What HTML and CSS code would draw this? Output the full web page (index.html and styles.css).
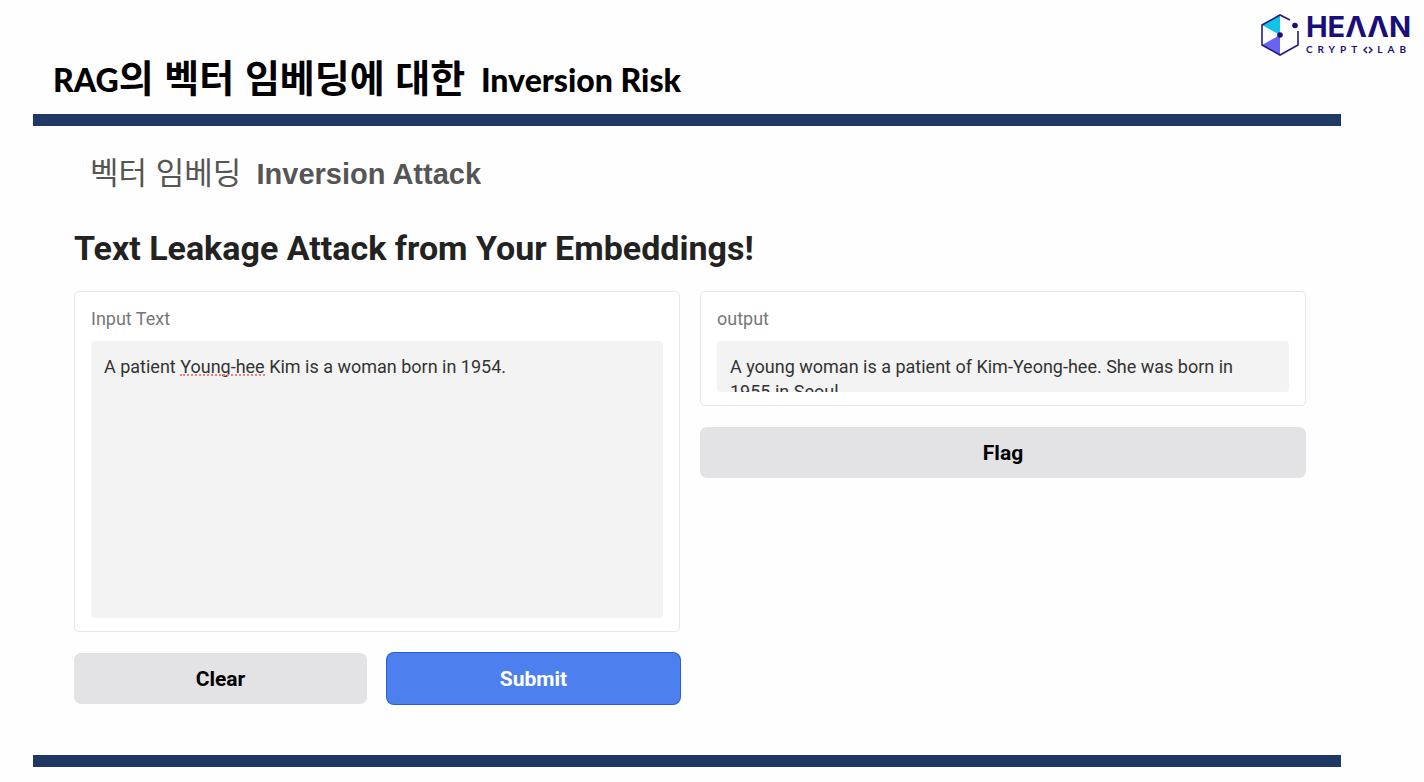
FILE: index.html
```html
<!DOCTYPE html>
<html lang="ko">
  <head>
    <meta charset="utf-8" />
    <title>RAG의 벡터 임베딩에 대한 Inversion Risk</title>
    <link rel="stylesheet" href="styles.css">
  </head>
  <body>
    <div class="slide">
      <header class="slide-header">
        <h1>RAG<span class="ko">의 벡터 임베딩에 대한</span> Inversion Risk</h1>
        <div class="logo">
          <svg class="logo-mark" viewBox="0 0 40 44" aria-hidden="true">
            <path d="M20 2 L2 12 L20 22 Z" fill="#10c4e8" />
            <path d="M20 22 L2 32 L20 42 Z" fill="#6a62f0" />
            <path d="M30 7 L20 2 L2 12 V32 L20 42 L38 32 V18" fill="none" stroke="#231c7c" stroke-width="1.6" />
            <circle cx="20" cy="22" r="2.8" fill="#1a0f7a" />
            <circle cx="35" cy="12.500" r="2.8" fill="#1a0f7a" />
          </svg>
          <div class="logo-text">
            <span class="logo-name">HEΛΛN</span>
            <span class="logo-sub">CRYPT<svg class="logo-o" viewBox="0 0 10 8" aria-label="O"><path d="M4 1 L1 4 L4 7 M6 1 L9 4 L6 7" fill="none" stroke="#231c7c" stroke-width="1.5" /></svg>LAB</span>
          </div>
        </div>
      </header>

      <main class="slide-body">
        <h2><span class="ko-sub">벡터 임베딩</span> <b>Inversion Attack</b></h2>

        <form class="demo">
          <h3>Text Leakage Attack from Your Embeddings!</h3>
          <div class="columns">
            <div class="column">
              <div class="card">
                <label for="inputText">Input Text</label>
                <div class="field">
                  <textarea id="inputText" class="input-text" spellcheck="false">A patient Young-hee Kim is a woman born in 1954.</textarea>
                  <span class="misspelled"></span>
                </div>
              </div>
              <div class="buttons">
                <button type="reset">Clear</button>
                <button type="button" class="primary">Submit</button>
              </div>
            </div>
            <div class="column">
              <div class="card">
                <label for="output">output</label>
                <div class="field">
                  <textarea id="output" class="output-text" spellcheck="false" readonly>A young woman is a patient of Kim-Yeong-hee. She was born in 1955 in Seoul.</textarea>
                </div>
              </div>
              <button type="button">Flag</button>
            </div>
          </div>
        </form>
      </main>
    </div>
  </body>
</html>
```

FILE: styles.css
```css
* {
  box-sizing: border-box;
}
body {
  margin: 0;
  background: #fefefe;
  color: #000;
  font-family: Roboto, "Noto Sans CJK KR", sans-serif;
}
h1,
h2,
h3 {
  margin: 0;
}
.slide {
  padding: 0 83px 14px 33px;
}

/* title bar */
.slide-header {
  position: relative;
  height: 126px;
  padding: 52px 20px 0;
  border-bottom: 12px solid #1f3864;
}
h1 {
  font-family: Lato, "Noto Sans CJK KR", sans-serif;
  font-size: 32px;
  font-weight: 900;
  line-height: 48px;
  white-space: nowrap;
}
.ko {
  margin-right: 8px;
  font-family: "Noto Sans CJK KR", sans-serif;
  font-size: 38px;
  font-weight: 700;
}

/* logo */
.logo {
  position: absolute;
  top: 12px;
  right: -70px;
  display: flex;
  align-items: center;
  gap: 6px;
}
.logo-mark {
  width: 40px;
  height: 44px;
}
.logo-text {
  display: flex;
  flex-direction: column;
  color: #1a0f7a;
  font-family: Lato, sans-serif;
}
.logo-name {
  font-family: Inter, sans-serif;
  font-size: 29px;
  font-weight: 700;
  line-height: 30px;
}
.logo-sub {
  display: flex;
  align-items: center;
  justify-content: space-between;
  font-size: 10px;
  font-weight: 700;
  line-height: 15px;
  letter-spacing: 5px;
}
.logo-o {
  width: 10px;
  height: 8px;
  margin-right: 4px;
}

/* demo */
.slide-body {
  padding: 25px 35px 51px 41px;
  border-bottom: 12px solid #1f3864;
}
h2 {
  padding-left: 16px;
  color: #555;
  font-size: 29px;
  font-weight: 400;
  line-height: 40px;
}
.ko-sub {
  margin-right: 8px;
  font-family: "Noto Sans CJK KR", sans-serif;
  font-size: 31px;
}
h2 b {
  font-family: "Liberation Sans", Arial, sans-serif;
}
h3 {
  margin: 32px 0 20px;
  color: #222;
  font-size: 34px;
  line-height: 45px;
}
.columns {
  display: grid;
  grid-template-columns: 1fr 1fr;
  gap: 20px;
  align-items: start;
}
.column {
  display: flex;
  flex-direction: column;
  gap: 21px;
}
.card {
  padding: 14px 16px 13px;
  border: 1px solid #e8e8e8;
  border-radius: 5px;
  background: #fff;
}
label {
  display: block;
  margin-bottom: 10px;
  color: #777;
  font-size: 18px;
  line-height: 25px;
}
.field {
  position: relative;
  display: flex;
}
textarea {
  width: 100%;
  padding: 13px;
  border: none;
  border-radius: 4px;
  outline: none;
  background: #f3f3f3;
  color: #333;
  font: inherit;
  font-size: 18px;
  line-height: 25px;
  resize: none;
  overflow: hidden;
}
.input-text {
  height: 277px;
}
.output-text {
  height: 51px;
}
/* spell check underline below "Young-hee" */
.misspelled {
  position: absolute;
  top: 33px;
  left: 89px;
  width: 85px;
  border-bottom: 2px dotted #f08080;
}
.buttons {
  display: grid;
  grid-template-columns: 1fr 1fr;
  gap: 20px;
}
button {
  height: 51px;
  border: none;
  border-radius: 7px;
  background: #e3e3e5;
  color: #000;
  font: inherit;
  font-size: 21px;
  font-weight: 700;
  cursor: pointer;
}
.primary {
  background: #4d7fee;
  box-shadow: 0 0 0 1px #2560cf;
  color: #fff;
}
```
